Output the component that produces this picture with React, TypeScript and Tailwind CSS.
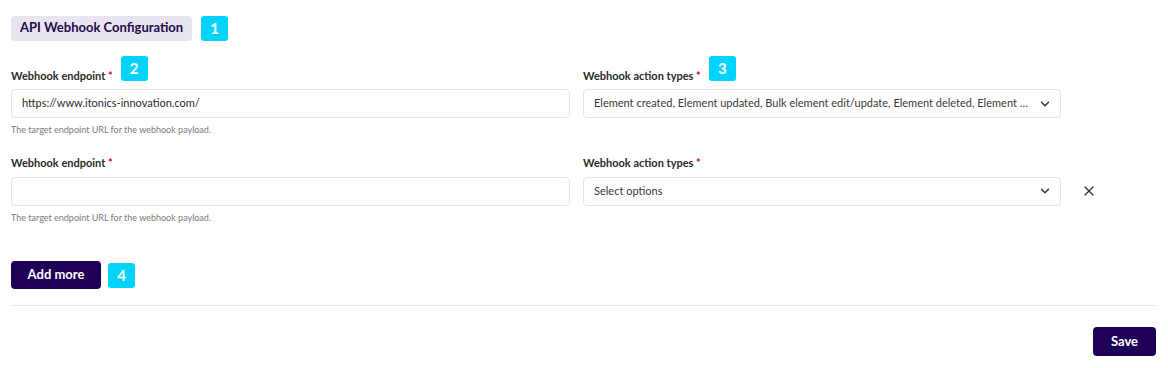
import { ChevronDown, X } from "lucide-react";

function Marker({ n }: { n: number }) {
  return (
    <span className="flex h-[25px] w-[27px] items-center justify-center rounded-[3px] bg-[#00d4fd] text-[15px] font-bold text-white">
      {n}
    </span>
  );
}

function Label({ text, marker }: { text: string; marker?: number }) {
  return (
    <div className="flex h-[24px] items-end">
      <span className="pb-[1px] text-[11px] font-bold text-[#2b2b2b]">
        {text} <span className="text-[#d0021b]">*</span>
      </span>
      {marker && (
        <span className="mb-[4px] ml-[8px]">
          <Marker n={marker} />
        </span>
      )}
    </div>
  );
}

function Row({ url, actions, markers, removable }: { url: string; actions: string; markers?: boolean; removable?: boolean }) {
  return (
    <div className="flex">
      <div className="w-[559px]">
        <Label text="Webhook endpoint" marker={markers ? 2 : undefined} />
        <div className="mt-[4px] flex h-[29px] items-center rounded-[4px] border border-[#e3e3e8] px-[10px] text-[11px] text-[#2b2b2b]">
          {url}
        </div>
        <p className="mt-[5px] text-[9px] text-[#7a7a7a]">The target endpoint URL for the webhook payload.</p>
      </div>
      <div className="ml-[13px] w-[478px]">
        <Label text="Webhook action types" marker={markers ? 3 : undefined} />
        <div className="mt-[4px] flex h-[29px] items-center rounded-[4px] border border-[#e3e3e8] pl-[10px] pr-[8px] text-[11px] text-[#3a3a3a]">
          <span className="flex-1 truncate pr-[8px]">{actions}</span>
          <ChevronDown size={14} strokeWidth={2.5} className="text-[#333]" />
        </div>
      </div>
      {removable && (
        <div className="ml-[20px] mt-[28px] flex h-[29px] items-center">
          <X size={16} strokeWidth={1.8} className="text-[#333]" />
        </div>
      )}
    </div>
  );
}

export default function App() {
  return (
    <div className="h-[368px] w-[1168px] bg-white px-[11px] pt-[15px] font-['Lato',sans-serif]">
      <div className="flex h-[26px] items-center gap-[9px]">
        <span className="flex h-[25px] items-center rounded-[4px] bg-[#e8e5ef] px-[9px] text-[13px] font-bold text-[#1e0a4c]">
          API Webhook Configuration
        </span>
        <Marker n={1} />
      </div>

      <div className="mt-[20px]">
        <Row
          url="https://www.itonics-innovation.com/"
          actions="Element created, Element updated, Bulk element edit/update, Element deleted, Element restored, Element archived"
          markers
        />
      </div>
      <div className="mt-[12px]">
        <Row url="" actions="Select options" removable />
      </div>

      <div className="mt-[37px] flex items-center gap-[7px]">
        <button className="h-[28px] w-[90px] rounded-[4px] bg-[#1e0057] text-[13px] font-bold text-white">Add more</button>
        <Marker n={4} />
      </div>

      <div className="mt-[16px] w-[1145px] border-t border-[#e6e6e6]" />

      <div className="flex w-[1145px] justify-end pt-[21px]">
        <button className="h-[29px] w-[63px] rounded-[4px] bg-[#1e0057] text-[13px] font-bold text-white">Save</button>
      </div>
    </div>
  );
}
